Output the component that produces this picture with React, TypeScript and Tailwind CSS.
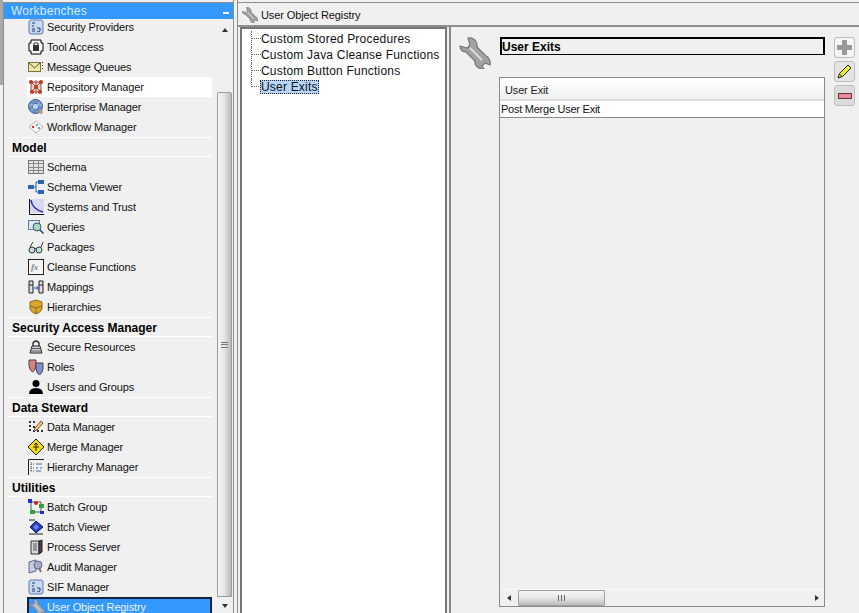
import React from 'react';
import { ReactNode } from 'react';

const WRENCH = 'M1 9 L8 11 L11 8 L9 1 C14 0 19 4 18 10 L27 19 C29 19 32 24 31 28 L26 26 L23 29 L25 32 C19 32 15 28 16 24 L7 15 C4 15 1 13 1 9 Z';

function Wrench({ size, color = '#a2a2a2' }: { size: number; color?: string }) {
  return (
    <svg width={size} height={size} viewBox="0 0 32 32">
      <path d={WRENCH} fill={color} stroke="#777777" strokeWidth={size > 20 ? 1.2 : 1.5} />
      <path d="M11 11 L23 23" stroke="#dcdcdc" strokeWidth="2" />
    </svg>
  );
}

function Ico({ children }: { children: ReactNode }) {
  return (
    <svg width="16" height="16" viewBox="0 0 16 16" className="shrink-0">
      {children}
    </svg>
  );
}

const sifIcon = (
  <Ico>
    <rect x="1" y="1" width="14" height="14" rx="2" fill="#c9d8f0" stroke="#5a7ab0" />
    <path d="M4 4h3M4 7h2M4 10h3M4 12h3" stroke="#1c3a70" />
    <path d="M9 9h3v3q-1.500 1.500-3 0" fill="none" stroke="#1c3a70" />
  </Ico>
);

const icons: Record<string, ReactNode> = {
  'Security Providers': sifIcon,
  'SIF Manager': sifIcon,
  'Tool Access': (
    <Ico>
      <path d="M3 1h10v3h2v8h-2v3H3v-3H1V4h2z" fill="#fff" stroke="#000" />
      <rect x="5" y="6" width="6" height="6" fill="#333" />
      <path d="M6 6V4h4v2" fill="none" stroke="#333" />
    </Ico>
  ),
  'Message Queues': (
    <Ico>
      <rect x="0.500" y="3.500" width="12" height="9" fill="#efe6a6" stroke="#77724a" />
      <path d="M1 4l5.500 5L12 4" fill="none" stroke="#55512f" />
      <path d="M14.500 3v1M14.500 6v1M14.500 9v1" stroke="#222" />
    </Ico>
  ),
  'Repository Manager': (
    <Ico>
      <path d="M3 3h10v10H3z" fill="#e5d3c5" stroke="#8a4a3a" />
      <path d="M3 3l10 10M13 3L3 13M8 1v14" stroke="#9b5a48" />
      <circle cx="3" cy="3" r="2" fill="#c8321e" />
      <circle cx="13" cy="3" r="2" fill="#c8321e" />
      <circle cx="8" cy="8" r="2" fill="#c8321e" />
      <circle cx="4" cy="13" r="2" fill="#c8321e" />
      <circle cx="12" cy="13" r="2" fill="#c8321e" />
    </Ico>
  ),
  'Enterprise Manager': (
    <Ico>
      <circle cx="7.500" cy="7.500" r="7" fill="#6d93c9" stroke="#3f5f90" />
      <circle cx="7.500" cy="7.500" r="3" fill="#d3e3f5" stroke="#3f5f90" />
      <path d="M1 6h13M3 12l9-9" stroke="#a9c3e4" />
      <circle cx="13" cy="13" r="2" fill="#c99a6a" />
    </Ico>
  ),
  'Workflow Manager': (
    <Ico>
      <path d="M8 2l7 6-7 6-7-6z" fill="#fafafa" stroke="#b5b5b5" />
      <circle cx="5" cy="8" r="1.200" fill="#d33" />
      <circle cx="9" cy="6" r="1" fill="#3a3" />
      <circle cx="11" cy="9" r="1" fill="#38c" />
    </Ico>
  ),
  Schema: (
    <Ico>
      <rect x="0.500" y="1.500" width="15" height="13" fill="#e4e4e4" stroke="#777" />
      <path d="M0.500 4.500h15M5.500 1.500v13M10.500 1.500v13M0.500 8.500h15M0.500 11.500h15" stroke="#888" />
    </Ico>
  ),
  'Schema Viewer': (
    <Ico>
      <rect x="0" y="6" width="6" height="4" fill="#2f64b0" />
      <rect x="10" y="1" width="6" height="4" fill="#2f64b0" />
      <rect x="10" y="11" width="6" height="4" fill="#2f64b0" />
      <path d="M6 8h2V3h2M8 8v5h2" fill="none" stroke="#2f64b0" />
    </Ico>
  ),
  'Systems and Trust': (
    <Ico>
      <rect x="2" y="0" width="14" height="14" fill="#d8d8f0" />
      <path d="M1.500 0v15.500H16" fill="none" stroke="#111" />
      <path d="M3 1q1 9 12 12" fill="none" stroke="#2a2ab0" strokeWidth="1.500" />
    </Ico>
  ),
  Queries: (
    <Ico>
      <rect x="0.500" y="1.500" width="11" height="9" fill="#dbe8f5" stroke="#66788c" />
      <circle cx="9" cy="8" r="4" fill="#a9d2c8" stroke="#3a5a6a" />
      <path d="M12 11l3.500 3.500" stroke="#2a3a6a" strokeWidth="1.500" />
    </Ico>
  ),
  Packages: (
    <Ico>
      <circle cx="4" cy="11" r="3" fill="#bfe0dc" stroke="#333" />
      <circle cx="11" cy="11" r="3" fill="#bfe0dc" stroke="#333" />
      <path d="M7 10q.500-1 1 0M2 8l3-5M13 8l2-5" fill="none" stroke="#333" />
    </Ico>
  ),
  'Cleanse Functions': (
    <Ico>
      <rect x="0.500" y="0.500" width="15" height="15" fill="#f4f4f4" stroke="#222" />
      <text x="3" y="11" fontSize="9" fontStyle="italic" fontWeight="700" fontFamily="Liberation Serif, serif" fill="#888">fx</text>
    </Ico>
  ),
  Mappings: (
    <Ico>
      <path d="M1 2h4v12H1zM11 2h4v12h-4zM1 6h4M11 6h4" fill="#ddd" stroke="#222" />
      <path d="M5.500 9H10M8.500 7l2 2-2 2" fill="none" stroke="#1f4fc0" />
    </Ico>
  ),
  Hierarchies: (
    <Ico>
      <path d="M2 3l6-2 6 2v7q-2 4-6 5-4-1-6-5z" fill="#d9a62e" stroke="#8a6a1a" />
      <path d="M2 7l6 2 6-2M8 9v6" fill="none" stroke="#8a6a1a" />
    </Ico>
  ),
  'Secure Resources': (
    <Ico>
      <path d="M5 7V4q3-4 6 0v3" fill="none" stroke="#222" strokeWidth="1.300" />
      <path d="M2 14l2-7h8l2 7z" fill="#d5d5d5" stroke="#222" />
      <path d="M2 12h12M4 9.500h8" stroke="#555" />
    </Ico>
  ),
  Roles: (
    <Ico>
      <path d="M1 1h7v6q-1 5-3.500 6Q2 12 1 7z" fill="#d98080" stroke="#444" />
      <path d="M8 4h7v6q-1 5-3.500 6Q9 15 8 10z" fill="#7f90d0" stroke="#444" />
    </Ico>
  ),
  'Users and Groups': (
    <Ico>
      <circle cx="8" cy="4.500" r="3.500" fill="#000" />
      <path d="M1 15q0-6 7-6t7 6z" fill="#000" />
    </Ico>
  ),
  'Data Manager': (
    <Ico>
      <path d="M1 2h2v2H1zM5 2h2v2H5zM1 6h2v2H1zM5 7h2v2H5zM1 10h2v2H1zM5 11h2v2H5zM9 11h2v2H9zM13 11h2v2h-2z" fill="#333" />
      <path d="M7 9l6-7 2 2-6 7-3 1z" fill="#f0d040" stroke="#7a4a8a" />
    </Ico>
  ),
  'Merge Manager': (
    <Ico>
      <path d="M8 0l8 8-8 8-8-8z" fill="#f5dc10" stroke="#222" />
      <path d="M8 4v8M6 6l2-2 2 2M5 8h6" fill="none" stroke="#222" />
    </Ico>
  ),
  'Hierarchy Manager': (
    <Ico>
      <path d="M0.500 16V0.500H16" fill="none" stroke="#222" />
      <path d="M3 3v9M3 5h3M3 9h3M3 12h3" stroke="#555" strokeDasharray="1 1" />
      <path d="M8 5h6M8 9h2M12 9h2M8 12h5" stroke="#3a6a9a" />
    </Ico>
  ),
  'Batch Group': (
    <Ico>
      <path d="M3 3h10v10H3z" fill="none" stroke="#555" />
      <rect x="0" y="0" width="4" height="4" fill="#2030c0" />
      <rect x="11" y="5" width="5" height="4" fill="#30a040" />
      <rect x="2" y="11" width="5" height="4" fill="#30a040" />
      <rect x="12" y="12" width="4" height="3" fill="#2030c0" />
      <circle cx="8" cy="4" r="2" fill="#d02020" />
    </Ico>
  ),
  'Batch Viewer': (
    <Ico>
      <path d="M1 1h6M1 15h14" stroke="#222" />
      <path d="M8 2l7 6-7 6-6-6z" fill="#2838c0" stroke="#15206a" />
      <path d="M5 8l3-3 3 3-3 3z" fill="#6f86e0" />
    </Ico>
  ),
  'Process Server': (
    <Ico>
      <path d="M3 2h8v13H3z" fill="#d8d8d8" stroke="#333" />
      <path d="M11 2l3-1v12l-3 2z" fill="#444" stroke="#222" />
      <path d="M5 5h4M5 7h4M5 9h4M5 11h4" stroke="#555" />
    </Ico>
  ),
  'Audit Manager': (
    <Ico>
      <path d="M1 3l7-2v11l-7 2z" fill="#c4cbe2" stroke="#62688a" />
      <circle cx="10" cy="6" r="4" fill="#a8aec8" stroke="#62688a" />
      <path d="M11 9l2 4" stroke="#777" strokeWidth="2" />
    </Ico>
  ),
  'User Object Registry': <Wrench size={16} color="#a9b0b8" />,
};

type Row = { label: string; header?: boolean; hover?: boolean; selected?: boolean };

const rows: Row[] = [
  { label: 'Security Providers' },
  { label: 'Tool Access' },
  { label: 'Message Queues' },
  { label: 'Repository Manager', hover: true },
  { label: 'Enterprise Manager' },
  { label: 'Workflow Manager' },
  { label: 'Model', header: true },
  { label: 'Schema' },
  { label: 'Schema Viewer' },
  { label: 'Systems and Trust' },
  { label: 'Queries' },
  { label: 'Packages' },
  { label: 'Cleanse Functions' },
  { label: 'Mappings' },
  { label: 'Hierarchies' },
  { label: 'Security Access Manager', header: true },
  { label: 'Secure Resources' },
  { label: 'Roles' },
  { label: 'Users and Groups' },
  { label: 'Data Steward', header: true },
  { label: 'Data Manager' },
  { label: 'Merge Manager' },
  { label: 'Hierarchy Manager' },
  { label: 'Utilities', header: true },
  { label: 'Batch Group' },
  { label: 'Batch Viewer' },
  { label: 'Process Server' },
  { label: 'Audit Manager' },
  { label: 'SIF Manager' },
  { label: 'User Object Registry', selected: true },
];

function SideRow({ row }: { row: Row }) {
  if (row.header) {
    return (
      <div className="h-5 shrink-0 flex items-center pl-1 pt-[2px] border-y border-white text-[12px] font-bold text-black bg-[#f0f0f0]">
        {row.label}
      </div>
    );
  }
  if (row.selected) {
    return (
      <div className="h-5 shrink-0 ml-[19px] pb-[2px] flex items-center gap-[2px] tracking-[-0.13px] text-[11px] bg-[#3399ff] text-[#e8f3ff] border-x-2 border-t-2 border-[#10223f]">
        {icons[row.label]}
        <span>{row.label}</span>
      </div>
    );
  }
  return (
    <div
      className={`h-5 shrink-0 ml-[19px] pl-[1px] flex items-center gap-[3px] tracking-[-0.13px] text-[11px] text-[#111] ${
        row.hover ? 'bg-white' : ''
      }`}
    >
      {icons[row.label]}
      <span>{row.label}</span>
    </div>
  );
}

function VScrollbar() {
  return (
    <div className="w-[15px] shrink-0 ml-[5px] flex flex-col items-center">
      <div className="h-[13px] shrink-0 flex items-end">
        <div className="w-0 h-0 border-x-[3px] border-x-transparent border-b-[4px] border-b-[#333]" />
      </div>
      <div className="h-[60px] shrink-0" />
      <div className="w-[15px] h-[505px] shrink-0 flex items-center justify-center border border-[#9c9c9c] rounded-t-[2px] bg-gradient-to-r from-[#f4f4f4] via-[#e4e4e4] to-[#b9b9b9]">
        <div className="w-[7px] h-[6px] border-y border-[#777] flex items-center">
          <div className="w-full h-[1px] bg-[#777]" />
        </div>
      </div>
      <div className="mt-[7px] w-0 h-0 border-x-[3px] border-x-transparent border-t-[4px] border-t-[#333]" />
    </div>
  );
}

function Sidebar() {
  return (
    <div className="w-[230px] shrink-0 h-full flex flex-col border-l border-t border-[#8e8e8e] overflow-hidden">
      <div className="h-4 shrink-0 relative z-10 bg-[#3399ff] flex items-center justify-between pl-[7px] pr-[4px]">
        <span className="text-[12px] tracking-[0.25px] text-[#d8ecff]">Workbenches</span>
        <div className="w-[6px] h-[2px] bg-white mt-[3px]" />
      </div>
      <div className="flex-1 flex min-h-0 overflow-hidden">
        <div className="w-[204px] ml-1 shrink-0 -mt-[2px] flex flex-col">
          {rows.map((r) => (
            <SideRow key={r.label} row={r} />
          ))}
        </div>
        <VScrollbar />
      </div>
    </div>
  );
}

const treeItems = ['Custom Stored Procedures', 'Custom Java Cleanse Functions', 'Custom Button Functions', 'User Exits'];

function Tree() {
  return (
    <div className="w-[207px] shrink-0 h-full bg-white border-2 border-[#777] border-b-0 pt-[2px] pl-[9px]">
      {treeItems.map((t, i) => {
        const last = i === treeItems.length - 1;
        return (
          <div key={t} className="h-4 flex items-center whitespace-nowrap text-[12px] tracking-[0.2px] text-[#111]">
            <div className={`w-[10px] shrink-0 self-start border-l border-dotted border-[#666] ${last ? 'h-[8px]' : 'h-4'}`}>
              <div className="h-[8px] border-b border-dotted border-[#666]" />
            </div>
            <span className={last ? 'ml-[-1px] px-[1px] bg-[#b5d5fb] outline-1 outline-dotted outline-[#222] outline-offset-[-1px] leading-[14px]' : ''}>
              {t}
            </span>
          </div>
        );
      })}
    </div>
  );
}

function SideButton({ children, bg }: { children: ReactNode; bg: string }) {
  return (
    <div className={`w-[21px] h-[21px] flex items-center justify-center rounded-[3px] border border-[#bdbdbd] ${bg}`}>
      {children}
    </div>
  );
}

function HScrollbar() {
  return (
    <div className="h-[17px] shrink-0 flex items-center border-t border-[#f8f8f8]">
      <div className="w-[18px] flex justify-center">
        <div className="w-0 h-0 border-y-[3px] border-y-transparent border-r-[4px] border-r-[#333]" />
      </div>
      <div className="w-[87px] h-[16px] flex items-center justify-center border border-[#a0a0a0] rounded-[1px] bg-gradient-to-b from-[#f6f6f6] via-[#e6e6e6] to-[#bcbcbc]">
        <span className="w-[7px] h-[6px] border-x border-[#666] flex justify-center">
          <span className="w-[1px] h-full bg-[#666]" />
        </span>
      </div>
      <div className="flex-1" />
      <div className="w-[15px] flex justify-center">
        <div className="w-0 h-0 border-y-[3px] border-y-transparent border-l-[4px] border-l-[#333]" />
      </div>
    </div>
  );
}

function Detail() {
  return (
    <div className="flex-1 min-w-0 h-full flex border-l-2 border-[#888] pt-[10px]">
      <div className="w-[48px] shrink-0 pl-[8px]">
        <Wrench size={32} />
      </div>
      <div className="w-[326px] shrink-0 flex flex-col pb-[6px]">
        <div className="ml-[1px] h-[18px] shrink-0 flex items-center border-2 border-black border-b-[1px] text-[12px] font-bold text-black leading-none">
          User Exits
        </div>
        <div className="mt-[22px] flex-1 min-h-0 flex flex-col border border-[#8a8a8a]">
          <div className="h-[23px] shrink-0 flex items-center pl-[5px] pt-[3px] text-[11px] tracking-[-0.15px] text-[#222] bg-gradient-to-b from-white to-[#f0f0f0] border-b-2 border-[#dcdcdc]">
            User Exit
          </div>
          <div className="h-[17px] shrink-0 flex items-center pl-[1px] pt-[1px] text-[11px] tracking-[-0.25px] text-[#111] bg-white border-b border-[#8a8a8a]">
            Post Merge User Exit
          </div>
          <div className="flex-1" />
          <HScrollbar />
        </div>
      </div>
      <div className="ml-[9px] shrink-0 flex flex-col gap-[3px]">
        <SideButton bg="bg-[#f4f4f4]">
          <div className="w-[15px] h-[15px] flex items-center justify-center relative">
            <div className="w-[15px] h-[5px] bg-[#999]" />
            <div className="absolute w-[5px] h-[15px] bg-[#999]" />
          </div>
        </SideButton>
        <SideButton bg="bg-[#e4e4e4]">
          <svg width="15" height="15" viewBox="0 0 15 15">
            <path d="M11 1l3 3-8.500 8.500-4.500 1.500 1.500-4.500z" fill="#eaf02a" stroke="#222" />
            <path d="M2.500 10l3 3" stroke="#222" />
          </svg>
        </SideButton>
        <SideButton bg="bg-[#dcdcdc]">
          <div className="w-[14px] h-[6px] bg-[#e88a9c] border border-[#6a2f3a]" />
        </SideButton>
      </div>
    </div>
  );
}

export default function App() {
  return (
    <div className="w-[859px] h-[613px] overflow-hidden flex bg-[#f0f0f0] text-black font-['Liberation_Sans',Arial,sans-serif]">
      {/* left strip */}
      <div className="w-[3px] shrink-0 h-[85px] bg-[#a8a8a8]" />
      <div className="shrink-0 h-full pt-[2px]">
        <Sidebar />
      </div>

      {/* splitter */}
      <div className="w-[4px] shrink-0 h-full border-l border-[#8e8e8e]" />

      <div className="flex-1 min-w-0 h-full pt-[2px] flex flex-col border-l border-[#8e8e8e]">
        <div className="h-[25px] shrink-0 flex items-center gap-[3px] pl-[4px] pt-[2px] border-t border-b-[2px] border-[#8e8e8e] text-[11px] tracking-[-0.1px] text-[#111]">
          <Wrench size={16} />
          <span>User Object Registry</span>
        </div>
        <div className="flex-1 min-h-0 flex pl-[2px]">
          <Tree />
          <div className="w-[2px] shrink-0" />
          <Detail />
        </div>
      </div>
    </div>
  );
}
